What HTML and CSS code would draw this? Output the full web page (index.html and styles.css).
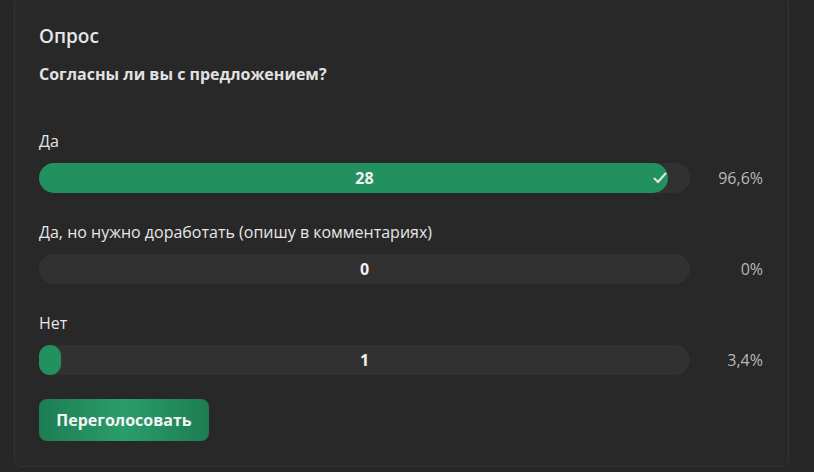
FILE: index.html
```html
<!DOCTYPE html>
<html lang="ru">
<head>
  <meta charset="UTF-8" />
  <title>Опрос</title>
  <link rel="stylesheet" href="styles.css">
</head>
<body>

  <div class="poll">
    <h3 class="poll-title">Опрос</h3>
    <div class="poll-question">Согласны ли вы с предложением?</div>

    <div class="poll-options">
      <div class="option">
        <div class="option-label">Да</div>
        <div class="option-row">
          <div class="bar">
            <div class="bar-fill voted" style="width: 96.6%;">
              <svg class="check" width="14" height="12" viewBox="0 0 14 12">
                <path d="M1.5 6.5 L5 10 L12.5 1.5" fill="none" stroke="#e8e8e8" stroke-width="2" stroke-linecap="round" stroke-linejoin="round"/>
              </svg>
            </div>
            <span class="bar-count">28</span>
          </div>
          <div class="option-percent">96,6%</div>
        </div>
      </div>

      <div class="option">
        <div class="option-label">Да, но нужно доработать (опишу в комментариях)</div>
        <div class="option-row">
          <div class="bar">
            <span class="bar-count">0</span>
          </div>
          <div class="option-percent">0%</div>
        </div>
      </div>

      <div class="option">
        <div class="option-label">Нет</div>
        <div class="option-row">
          <div class="bar">
            <div class="bar-fill" style="width: 3.4%;"></div>
            <span class="bar-count">1</span>
          </div>
          <div class="option-percent">3,4%</div>
        </div>
      </div>
    </div>

    <button class="revote-btn" type="button">Переголосовать</button>
  </div>

</body>
</html>
```

FILE: styles.css
```css
    body {
      margin: 0;
      background-color: #272727;
      font-family: "Open Sans", "Noto Sans", Arial, sans-serif;
      color: #e4e4e4;
    }
    .poll {
      margin: -4px 24px 0 14px;
      width: 724px;
      padding: 26px 25px 25px 24px;
      background-color: #282828;
      border: 1px solid #343434;
      border-radius: 8px;
    }
    .poll-title {
      margin: 0;
      font-size: 19px;
      font-weight: 600;
      line-height: 26px;
      color: #e6e6e6;
    }
    .poll-question {
      margin-top: 14px;
      font-size: 16px;
      font-weight: 700;
      line-height: 22px;
      color: #e2e2e2;
    }
    .poll-options {
      margin-top: 45px;
      display: flex;
      flex-direction: column;
      gap: 28px;
    }
    .option-label {
      font-size: 16px;
      line-height: 22px;
      color: #e6e6e6;
      margin-bottom: 11px;
    }
    .option-row {
      display: flex;
      align-items: center;
    }
    .bar {
      position: relative;
      width: 651px;
      height: 30px;
      border-radius: 15px;
      background-color: #313131;
      display: flex;
      align-items: center;
      justify-content: center;
    }
    .bar-fill {
      position: absolute;
      left: 0;
      top: 0;
      bottom: 0;
      min-width: 22px;
      border-radius: 15px;
      background-color: #23915f;
    }
    .bar-fill.voted .check {
      position: absolute;
      right: 1px;
      top: 9px;
    }
    .bar-count {
      position: relative;
      font-size: 16px;
      font-weight: 700;
      color: #f2f2f2;
    }
    .option-percent {
      flex: 1;
      text-align: right;
      font-size: 16px;
      color: #b8b8b8;
    }
    .revote-btn {
      margin-top: 24px;
      width: 170px;
      height: 42px;
      border: none;
      border-radius: 8px;
      background: linear-gradient(90deg, #1d7d53 0%, #2a9d6b 50%, #1d7d53 100%);
      color: #f4f4f4;
      font-family: "Open Sans", "Noto Sans", Arial, sans-serif;
      font-size: 16px;
      font-weight: 700;
      cursor: pointer;
    }
```
